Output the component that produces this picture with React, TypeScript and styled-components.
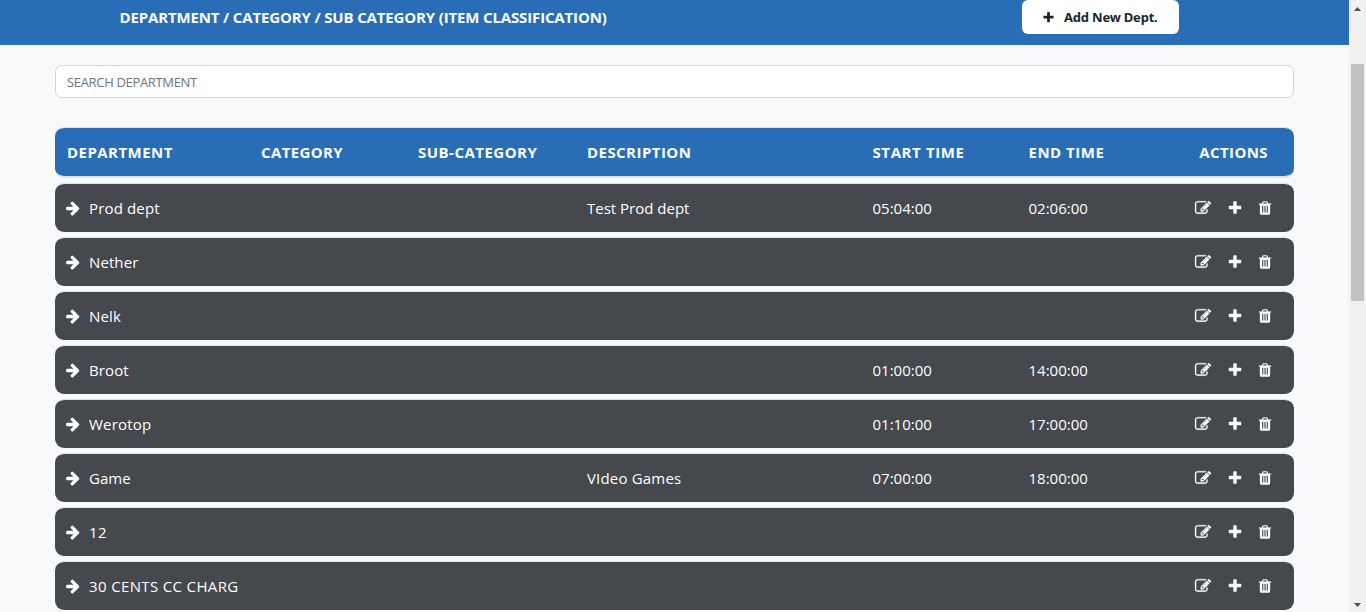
import React from 'react';
import styled, { createGlobalStyle } from 'styled-components';

const GlobalStyle = createGlobalStyle`
  * { box-sizing: border-box; }
  body {
    margin: 0;
    overflow: hidden;
    background: #f8f9fb;
    font-family: 'Open Sans', 'Noto Sans', sans-serif;
    font-size: 15px;
    color: #fff;
  }
`;

const Page = styled.div`
  display: flex;
  height: 612px;
  overflow: hidden;
`;

const Content = styled.main`
  flex: 1;
  min-width: 0;
  height: 612px;
  overflow: hidden;
`;

const Header = styled.header`
  display: flex;
  justify-content: space-between;
  height: 45px;
  padding: 0 170px 0 119.5px;
  background: #296db6;
`;

const Title = styled.h1`
  margin: 0;
  font-size: 15px;
  font-weight: 700;
  line-height: 35px;
  letter-spacing: -0.15px;
  white-space: nowrap;
`;

const AddButton = styled.button`
  display: flex;
  align-items: center;
  gap: 9px;
  width: 157px;
  height: 34px;
  padding: 0 0 0 20px;
  border: 0;
  border-radius: 6px;
  background: #fff;
  color: #212529;
  font: 700 13px 'Noto Sans', sans-serif;
  letter-spacing: -0.2px;
  white-space: nowrap;
`;

const Body = styled.section`
  padding: 20px 55px 0;
`;

const Search = styled.input`
  display: block;
  width: 100%;
  height: 33px;
  margin-bottom: 29px;
  padding: 0 11px;
  border: 1px solid #ced4da;
  border-radius: 7px;
  background: #fff;
  font: 400 13px 'Open Sans', sans-serif;
  letter-spacing: -0.33px;
  outline: none;
  &::placeholder { color: #6c757d; opacity: 1; }
`;

const Row = styled.div<{ $head?: boolean }>`
  display: grid;
  grid-template-columns: 194px 157px 169px 285.5px 156px 1fr;
  align-items: center;
  height: ${(p) => (p.$head ? 51 : 49)}px;
  margin-bottom: 5px;
  padding: 0 22px 0 12px;
  border-top: 1px solid #dee2e6;
  border-bottom: ${(p) => (p.$head ? '2px solid #dee2e6' : '0')};
  border-radius: 9px;
  background: ${(p) => (p.$head ? '#296db6' : '#45484d')};
  background-clip: padding-box;
  font-weight: ${(p) => (p.$head ? 700 : 400)};
`;

const Cell = styled.div<{ $spacing?: number }>`
  letter-spacing: ${(p) => p.$spacing ?? 0}px;
  line-height: 24px;
  white-space: nowrap;
`;

const ActionsTitle = styled(Cell)`
  margin-right: 4px;
`;

const LastCell = styled.div`
  display: flex;
  align-items: center;
  justify-content: space-between;
`;

const Name = styled.div<{ $spacing: number }>`
  display: flex;
  align-items: center;
  gap: 8px;
  margin-left: -2px;
  letter-spacing: ${(p) => p.$spacing}px;
  white-space: nowrap;
`;

const Actions = styled.div`
  display: flex;
  align-items: center;
  gap: 14px;
  margin-right: -1px;
`;

const Glyph = styled.svg<{ $bold?: boolean }>`
  display: block;
  flex: none;
  fill: currentColor;
  stroke: ${(p) => (p.$bold ? 'currentColor' : 'none')};
  stroke-width: 30;
  margin-right: ${(p) => (p.$bold ? 2 : 0)}px;
  overflow: visible;
`;

const Track = styled.aside`
  display: flex;
  flex-direction: column;
  align-items: center;
  justify-content: space-between;
  width: 17px;
  height: 612px;
  padding: 7px 0 5px;
  background: #f1f1f1;
`;

const Thumb = styled.div`
  width: 13px;
  height: 237px;
  margin: 53px 0 auto;
  background: #c1c1c1;
`;

const Arrow = styled.svg`
  display: block;
  fill: #505050;
`;

const paths = {
  arrow:
    'M1600 960q0 54-37 91l-651 651q-39 37-91 37-51 0-90-37l-75-75q-38-38-38-91t38-91l293-293h-704q-52 0-84.5-37.5t-32.5-90.5v-128q0-53 32.5-90.5t84.5-37.5h704l-293-294q-38-36-38-90t38-90l75-75q38-38 90-38 53 0 91 38l651 651q37 35 37 90z',
  plus:
    'M1600 736v192q0 40-28 68t-68 28h-416v416q0 40-28 68t-68 28h-192q-40 0-68-28t-28-68v-416h-416q-40 0-68-28t-28-68v-192q0-40 28-68t68-28h416v-416q0-40 28-68t68-28h192q40 0 68 28t28 68v416h416q40 0 68 28t28 68z',
  edit:
    'M888 1184l116-116-152-152-116 116v56h96v96h56zm440-720q-16-16-33 1l-350 350q-17 17-1 33t33-1l350-350q17-17 1-33zm80 594v190q0 119-84.5 203.5t-203.5 84.5h-832q-119 0-203.5-84.5t-84.5-203.5v-832q0-119 84.5-203.5t203.5-84.5h832q63 0 117 25 15 7 18 23 3 17-9 29l-49 49q-14 14-32 8-23-6-45-6h-832q-66 0-113 47t-47 113v832q0 66 47 113t113 47h832q66 0 113-47t47-113v-126q0-13 9-22l64-64q15-15 35-7t20 29zm-96-738l288 288-672 672h-288v-288zm444 132l-92 92-288-288 92-92q28-28 68-28t68 28l152 152q28 28 28 68t-28 68z',
  trash:
    'M704 1376v-704q0-14-9-23t-23-9h-64q-14 0-23 9t-9 23v704q0 14 9 23t23 9h64q14 0 23-9t9-23zm256 0v-704q0-14-9-23t-23-9h-64q-14 0-23 9t-9 23v704q0 14 9 23t23 9h64q14 0 23-9t9-23zm256 0v-704q0-14-9-23t-23-9h-64q-14 0-23 9t-9 23v704q0 14 9 23t23 9h64q14 0 23-9t9-23zm-544-992h448l-48-117q-7-9-17-11h-317q-10 2-17 11zm928 32v64q0 14-9 23t-23 9h-96v948q0 83-47 143.5t-113 60.5h-832q-66 0-113-58.5t-47-141.5v-952h-96q-14 0-23-9t-9-23v-64q0-14 9-23t23-9h309l70-167q15-37 54-63t79-26h320q40 0 79 26t54 63l70 167h309q14 0 23 9t9 23z',
};

interface IconProps {
  name: keyof typeof paths;
  size?: number;
  bold?: boolean;
}

function Icon({ name, size = 16, bold }: IconProps) {
  return (
    <Glyph $bold={bold} width={size} height={size} viewBox="0 0 1792 1792" aria-hidden>
      <path d={paths[name]} />
    </Glyph>
  );
}

interface Department {
  name: string;
  spacing: number;
  description?: string;
  descriptionSpacing?: number;
  start?: string;
  end?: string;
}

const departments: Department[] = [
  { name: 'Prod dept', spacing: 0.15, description: 'Test Prod dept', start: '05:04:00', end: '02:06:00' },
  { name: 'Nether', spacing: 0.1 },
  { name: 'Nelk', spacing: 0.2 },
  { name: 'Broot', spacing: 0.1, start: '01:00:00', end: '14:00:00' },
  { name: 'Werotop', spacing: 0.2, start: '01:10:00', end: '17:00:00' },
  { name: 'Game', spacing: 0, description: 'VIdeo Games', descriptionSpacing: 0.18, start: '07:00:00', end: '18:00:00' },
  { name: '12', spacing: 0.3 },
  { name: '30 CENTS CC CHARG', spacing: 0.36 },
];

export default function App() {
  return (
    <>
      <GlobalStyle />
      <Page>
        <Content>
          <Header>
            <Title>DEPARTMENT / CATEGORY / SUB CATEGORY (ITEM CLASSIFICATION)</Title>
            <AddButton>
              <Icon name="plus" size={13} />
              Add New Dept.
            </AddButton>
          </Header>
          <Body>
            <Search placeholder="SEARCH DEPARTMENT" />
            <Row $head>
              <Cell $spacing={0.45}>DEPARTMENT</Cell>
              <Cell $spacing={0.37}>CATEGORY</Cell>
              <Cell $spacing={0.48}>SUB-CATEGORY</Cell>
              <Cell $spacing={0.45}>DESCRIPTION</Cell>
              <Cell $spacing={0.6}>START TIME</Cell>
              <LastCell>
                <Cell $spacing={0.5}>END TIME</Cell>
                <ActionsTitle $spacing={0.4}>ACTIONS</ActionsTitle>
              </LastCell>
            </Row>
            {departments.map((d) => (
              <Row key={d.name}>
                <Name $spacing={d.spacing}>
                  <Icon name="arrow" />
                  {d.name}
                </Name>
                <Cell />
                <Cell />
                <Cell $spacing={d.descriptionSpacing}>{d.description}</Cell>
                <Cell>{d.start}</Cell>
                <LastCell>
                  <Cell>{d.end}</Cell>
                  <Actions>
                    <Icon name="edit" bold />
                    <Icon name="plus" />
                    <Icon name="trash" />
                  </Actions>
                </LastCell>
              </Row>
            ))}
          </Body>
        </Content>
        <Track>
          <Arrow width="7" height="4" viewBox="0 0 7 4"><path d="M0 4L3.5 0L7 4Z" /></Arrow>
          <Thumb />
          <Arrow width="7" height="4" viewBox="0 0 7 4"><path d="M0 0H7L3.5 4Z" /></Arrow>
        </Track>
      </Page>
    </>
  );
}
